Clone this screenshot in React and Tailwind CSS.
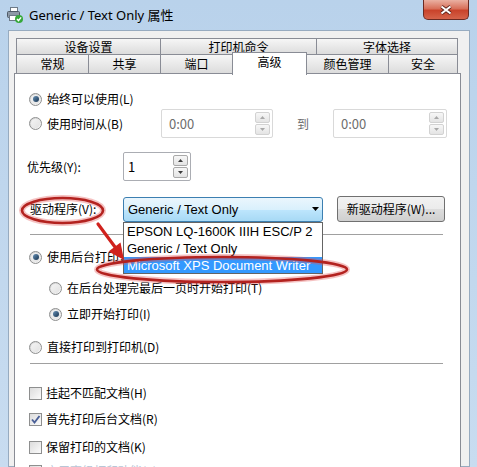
import { Fragment } from 'react'

function PrinterIcon() {
  return (
    <svg width="16" height="16" viewBox="0 0 16 16">
      <rect x="3.5" y="0.5" width="7" height="4" fill="#fff" stroke="#6d7a88" />
      <rect x="0.5" y="4.5" width="12" height="6" rx="1" fill="#8d99a7" stroke="#4f5a66" />
      <rect x="2.5" y="8.5" width="8" height="5" fill="#fff" stroke="#6d7a88" />
      <circle cx="12" cy="12" r="4" fill="#35a83a" />
      <path d="M10 12 l1.5 1.6 l2.6 -3.2" stroke="#fff" fill="none" strokeWidth="1.4" />
    </svg>
  )
}

function CloseButton() {
  return (
    <div className="ml-auto mr-[8px] flex h-[20px] w-[46px] items-center justify-center rounded-b-[5px] border border-t-0 border-[#6b2a22] bg-[linear-gradient(#eab0a2,#d8705a_45%,#c9432b_55%,#d5634a)]">
      <svg width="12" height="10" viewBox="0 0 12 10">
        <path d="M1.5 1.5 L10.5 8.5 M10.5 1.5 L1.5 8.5" stroke="#5a2018" strokeWidth="3.6" />
        <path d="M1.5 1.5 L10.5 8.5 M10.5 1.5 L1.5 8.5" stroke="#fff" strokeWidth="2" />
      </svg>
    </div>
  )
}

function Radio({ checked }) {
  return (
    <span className="flex h-[13px] w-[13px] shrink-0 items-center justify-center rounded-full border border-[#8e8f8f] bg-linear-to-br from-[#d0d0d0] to-[#fbfbfb]">
      <span className="flex h-[9px] w-[9px] items-center justify-center rounded-full bg-linear-to-br from-[#f4f4f4] to-[#e2e2e2]">
        {checked && <span className="h-[6px] w-[6px] rounded-full bg-linear-to-br from-[#6a93b8] to-[#173450]" />}
      </span>
    </span>
  )
}

function Check({ checked }) {
  return (
    <span className="flex h-[13px] w-[13px] shrink-0 items-center justify-center border border-[#8e8f8f] bg-linear-to-br from-[#dcdcdc] to-[#fbfbfb]">
      {checked && (
        <svg width="11" height="11" viewBox="0 0 11 11">
          <path d="M2 5.5 L4.5 8.5 L9.5 2" stroke="#4a5f97" strokeWidth="1.9" fill="none" />
        </svg>
      )}
    </span>
  )
}

function Spin({ disabled }) {
  const tone = disabled
    ? 'border-[#d2d2d2] text-[#a8a8a8]'
    : 'border-[#a9a9a9] text-[#3c3c3c]'
  return (
    <div className="flex w-[15px] flex-col gap-px">
      <div className={`flex h-[11px] items-center justify-center rounded-[2px] border bg-linear-to-b from-[#f7f7f7] to-[#e4e4e4] ${tone}`}>
        <svg width="5" height="3" viewBox="0 0 5 3"><path d="M0 3 L2.5 0 L5 3Z" fill="currentColor" /></svg>
      </div>
      <div className={`flex h-[11px] items-center justify-center rounded-[2px] border bg-linear-to-b from-[#f7f7f7] to-[#e4e4e4] ${tone}`}>
        <svg width="5" height="3" viewBox="0 0 5 3"><path d="M0 0 L2.5 3 L5 0Z" fill="currentColor" /></svg>
      </div>
    </div>
  )
}

function TimeBox({ width }) {
  return (
    <div className={`flex h-[29px] items-center justify-between rounded-[2px] border border-[#d9d9d9] pl-[7px] pr-[2px] text-[13px] text-[#6d6d6d] ${width}`}>
      <span className="leading-none">0:00</span>
      <Spin disabled />
    </div>
  )
}

const TABS_TOP = [
  { label: '设备设置', w: 'w-[145px]' },
  { label: '打印机命令', w: 'w-[157px]' },
  { label: '字体选择', w: 'w-[142px]' },
]

const TABS_BOTTOM = [
  { label: '常规', w: 'w-[73px]' },
  { label: '共享', w: 'w-[73px]' },
  { label: '端口', w: 'w-[73px]' },
  { label: '高级', w: 'w-[75px]', active: true },
  { label: '颜色管理', w: 'w-[83px]' },
  { label: '安全', w: 'w-[70px]' },
]

const DRIVERS = [
  { label: 'EPSON LQ-1600K IIIH ESC/P 2', h: 'h-[17px]' },
  { label: 'Generic / Text Only', h: 'h-[17px]' },
  { label: 'Microsoft XPS Document Writer', h: 'h-[16px]', selected: true },
]

export default function App() {
  return (
    <div className="relative h-[467px] w-[477px] overflow-hidden bg-linear-to-b from-[#b9d2eb] to-[#c8dcf0] font-['Noto_Sans_CJK_SC','Noto_Sans',sans-serif] text-[12px] text-black">
      {/* title bar */}
      <div className="flex h-[30px] items-start">
        <div className="ml-[7px] mt-[7px]"><PrinterIcon /></div>
        <div className="ml-[6px] mt-[7px] font-['Noto_Sans','Noto_Sans_CJK_SC',sans-serif] text-[13px] leading-[16px]">
          Generic / Text Only 属性
        </div>
        <CloseButton />
      </div>

      {/* dialog body */}
      <div className="ml-[8px] h-[437px] w-[462px] border border-[#97abc0] bg-[#f0f0f0] pt-[7px]">
        {/* tabs */}
        <div className="ml-[7px] flex h-[17px]">
          {TABS_TOP.map((t, i) => (
            <div
              key={t.label}
              className={`flex h-[17px] items-center justify-center border border-[#898c95] bg-linear-to-b from-[#f6f6f6] to-[#dcdcdc] leading-none ${t.w} ${i > 0 ? '-ml-px' : ''}`}
            >
              {t.label}
            </div>
          ))}
        </div>
        <div className="-mt-px ml-[7px] flex h-[20px] items-start">
          {TABS_BOTTOM.map((t, i) => (
            <Fragment key={t.label}>
              {t.active ? (
                <div className={`relative z-10 -mt-[2px] flex h-[23px] items-start justify-center border border-b-0 border-[#898c95] bg-white pt-[3px] leading-none ${t.w} ${i > 0 ? '-ml-px' : ''}`}>
                  {t.label}
                </div>
              ) : (
                <div className={`flex h-[20px] items-center justify-center border border-[#898c95] bg-linear-to-b from-[#f6f6f6] to-[#dcdcdc] leading-none ${t.w} ${i > 0 ? '-ml-px' : ''}`}>
                  {t.label}
                </div>
              )}
            </Fragment>
          ))}
        </div>

        {/* tab page */}
        <div className="-mt-px ml-[5px] flex h-[430px] w-[447px] flex-col border border-[#898c95] bg-white">
          <div className="mt-[16px] flex h-[18px] shrink-0 items-center pl-[14px]">
            <Radio checked />
            <span className="ml-[5px] leading-none">始终可以使用(L)</span>
          </div>

          <div className="mt-px flex h-[29px] shrink-0 items-center">
            <div className="flex w-[146px] items-center pl-[14px]">
              <Radio />
              <span className="ml-[5px] leading-none">使用时间从(B)</span>
            </div>
            <TimeBox width="w-[112px]" />
            <span className="ml-[24px] leading-none text-[#6d6d6d]">到</span>
            <div className="ml-[24px]"><TimeBox width="w-[114px]" /></div>
          </div>

          <div className="mt-[14px] flex h-[29px] shrink-0 items-center">
            <div className="w-[108px] pl-[12px] leading-none">优先级(Y):</div>
            <div className="flex h-[29px] w-[68px] items-center justify-between rounded-[2px] border border-[#abadb3] pl-[4px] pr-[2px] text-[13px]">
              <span className="leading-none">1</span>
              <Spin />
            </div>
          </div>

          <div className="mt-[15px] flex h-[26px] shrink-0 items-center">
            <div className="w-[108px] pl-[15px] leading-none">驱动程序(V):</div>
            <div className="flex h-[25px] w-[200px] items-center justify-between rounded-[3px] border border-[#3c7fb1] bg-[linear-gradient(#eaf6fd,#d9f0fc_50%,#bee6fd_50%,#a7d9f5)] pl-[4px] pr-[3px] font-['Liberation_Sans',sans-serif] text-[13px]">
              <span className="leading-none">Generic / Text Only</span>
              <svg width="7" height="4" viewBox="0 0 7 4"><path d="M0 0 L7 0 L3.5 4Z" fill="#000" /></svg>
            </div>
            <div className="ml-[14px] flex h-[26px] w-[108px] items-center justify-center rounded-[3px] border border-[#707070] bg-[linear-gradient(#f2f2f2,#ebebeb_50%,#dddddd_50%,#cfcfcf)] leading-none">
              新驱动程序(W)...
            </div>
          </div>

          <div className="ml-[15px] mt-[12px] h-px w-[413px] shrink-0 bg-[#a0a0a0]" />

          <div className="mt-[13px] flex h-[18px] shrink-0 items-center pl-[14px]">
            <Radio checked />
            <span className="ml-[5px] w-[76px] overflow-hidden whitespace-nowrap leading-none">使用后台打印，以便程序更快地结束打印(S)</span>
          </div>
          <div className="mt-[13px] flex h-[18px] shrink-0 items-center pl-[34px]">
            <Radio />
            <span className="ml-[5px] leading-none">在后台处理完最后一页时开始打印(T)</span>
          </div>
          <div className="mt-[8px] flex h-[18px] shrink-0 items-center pl-[34px]">
            <Radio checked />
            <span className="ml-[5px] leading-none">立即开始打印(I)</span>
          </div>
          <div className="mt-[15px] flex h-[18px] shrink-0 items-center pl-[14px]">
            <Radio />
            <span className="ml-[5px] leading-none">直接打印到打印机(D)</span>
          </div>

          <div className="ml-[15px] mt-[7px] h-px w-[413px] shrink-0 bg-[#a0a0a0]" />

          <div className="mt-[20px] flex h-[18px] shrink-0 items-center pl-[14px]">
            <Check />
            <span className="ml-[4px] leading-none">挂起不匹配文档(H)</span>
          </div>
          <div className="mt-[8px] flex h-[18px] shrink-0 items-center pl-[14px]">
            <Check checked />
            <span className="ml-[4px] leading-none">首先打印后台文档(R)</span>
          </div>
          <div className="mt-[10px] flex h-[18px] shrink-0 items-center pl-[14px]">
            <Check />
            <span className="ml-[4px] leading-none">保留打印的文档(K)</span>
          </div>
          <div className="mt-[6px] flex h-[18px] shrink-0 items-center pl-[14px] text-[#b9c6d6]">
            <Check checked />
            <span className="ml-[4px] leading-none">启用高级打印功能(E)</span>
          </div>
        </div>
      </div>

      {/* open driver list */}
      <div className="absolute left-[123px] top-[222px] w-[200px] border border-[#646464] bg-white font-['Liberation_Sans',sans-serif] text-[13px]">
        {DRIVERS.map((d) => (
          <div
            key={d.label}
            className={`flex items-center pl-[3px] leading-none ${d.h} ${d.selected ? 'bg-[#3399ff] text-white' : ''}`}
          >
            {d.label}
          </div>
        ))}
      </div>

      {/* red annotations */}
      <svg className="pointer-events-none absolute left-0 top-0" width="477" height="467" viewBox="0 0 477 467">
        <g fill="none">
          <ellipse cx="62.5" cy="210.5" rx="40.5" ry="12.5" stroke="rgba(225,80,80,0.35)" strokeWidth="6" />
          <ellipse cx="62.5" cy="210.5" rx="40.5" ry="12.5" stroke="#b3221f" strokeWidth="2.6" />
          <ellipse cx="222" cy="269.5" rx="125" ry="12.5" stroke="rgba(225,80,80,0.35)" strokeWidth="6" />
          <ellipse cx="222" cy="269.5" rx="125" ry="12.5" stroke="#b3221f" strokeWidth="2.6" />
          <path d="M98 224 L115 247" stroke="#d0221d" strokeWidth="3.2" strokeLinecap="round" />
        </g>
        <path d="M124 260 L120.5 242.5 L108.5 251.5 Z" fill="#d0221d" />
      </svg>
    </div>
  )
}
